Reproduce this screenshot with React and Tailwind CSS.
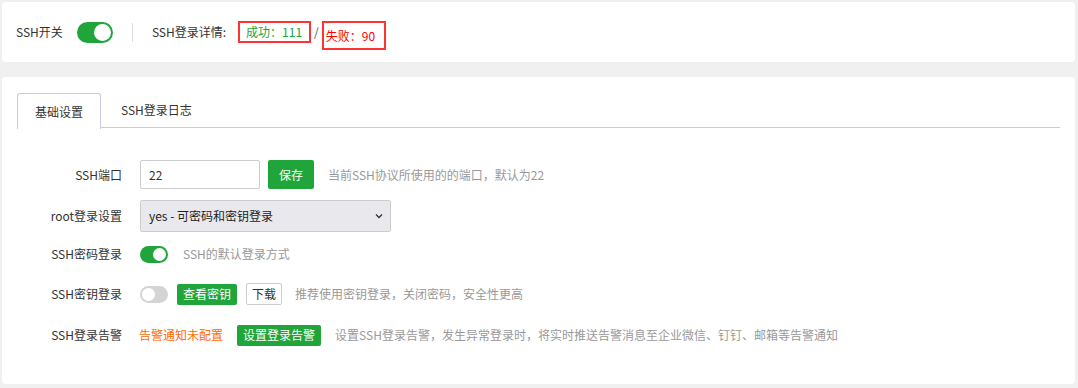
import React from "react";

function Toggle({ on, big }) {
  if (big) {
    return (
      <div className="relative w-[36px] h-[21px] rounded-full bg-[#20a53a]">
        <div className="absolute right-[2px] top-[2px] w-[17px] h-[17px] rounded-full bg-white" />
      </div>
    );
  }
  return (
    <div className={`relative w-[28px] h-[17px] rounded-full ${on ? "bg-[#20a53a]" : "bg-[#d4d4d4]"}`}>
      <div
        className={`absolute top-[2px] w-[13px] h-[13px] rounded-full bg-white ${on ? "right-[2px]" : "left-[2px]"}`}
      />
    </div>
  );
}

function Row({ label, className, children }) {
  return (
    <div className={`flex items-center ${className}`}>
      <div className="w-[105px] text-right text-[12px] text-[#333] shrink-0">{label}</div>
      <div className="ml-[18px] flex items-center h-full">{children}</div>
    </div>
  );
}

export default function App() {
  return (
    <div
      className="w-[1078px] h-[388px] bg-[#f0f0f0] pt-[2px] pl-[2px] pr-[3px]"
      style={{ fontFamily: '"Noto Sans CJK SC", "Noto Sans", sans-serif' }}
    >
      <div className="h-[60px] bg-white rounded-[4px] flex items-center pl-[14px] text-[12px] text-[#333]">
        <span>SSH开关</span>
        <div className="ml-[14px]">
          <Toggle big />
        </div>
        <div className="ml-[19px] w-px h-[19px] bg-[#ddd]" />
        <span className="ml-[19px]">SSH登录详情:</span>
        <div className="ml-[12px] self-start mt-[19px] flex items-start">
          <div className="w-[73px] h-[22px] border-2 border-[#ff3333] flex items-center pl-[6px] text-[#20a53a]">
            成功：111
          </div>
          <span className="ml-[3px] mt-[2px] text-[#555]">/</span>
          <div className="ml-[3px] w-[64px] h-[29px] border-2 border-[#ff3333] flex items-center pl-[2px] text-[#ff0000]">
            失败：90
          </div>
        </div>
      </div>

      <div className="mt-[15px] h-[307px] bg-white rounded-[4px] px-[15px] pt-[16px]">
        <div className="flex h-[35px] border-b border-[#cdc9dc] text-[12px] text-[#333]">
          <div className="w-[84px] h-[36px] border border-b-0 border-[#cdc9dc] rounded-t-[3px] bg-white flex items-center justify-center">
            基础设置
          </div>
          <div className="px-[20px] flex items-center">SSH登录日志</div>
        </div>

        <Row label="SSH端口" className="mt-[32px] h-[29px]">
          <div className="w-[120px] h-[29px] border border-[#ccc] rounded-[2px] flex items-center pl-[8px] text-[12px] text-[#333]">
            22
          </div>
          <button className="ml-[8px] w-[46px] h-[29px] bg-[#20a53a] text-white text-[12px] rounded-[2px]">
            保存
          </button>
          <span className="ml-[14px] text-[12px] text-[#999]">当前SSH协议所使用的的端口，默认为22</span>
        </Row>

        <Row label="root登录设置" className="mt-[11px] h-[32px]">
          <div className="w-[251px] h-[32px] border border-[#ccc] bg-[#e9e9ed] rounded-[2px] flex items-center justify-between pl-[8px] pr-[6px] text-[12px] text-[#222]">
            <span>yes - 可密码和密钥登录</span>
            <svg width="10" height="10" viewBox="0 0 10 10" fill="none">
              <path d="M2 3.5 L5 6.5 L8 3.5" stroke="#333" strokeWidth="1.3" />
            </svg>
          </div>
        </Row>

        <Row label="SSH密码登录" className="mt-[7px] h-[30px]">
          <Toggle on />
          <span className="ml-[15px] text-[12px] text-[#999]">SSH的默认登录方式</span>
        </Row>

        <Row label="SSH密钥登录" className="mt-[10px] h-[30px]">
          <Toggle on={false} />
          <button className="ml-[9px] w-[60px] h-[21px] bg-[#20a53a] text-white text-[12px] rounded-[2px]">
            查看密钥
          </button>
          <button className="ml-[9px] w-[36px] h-[22px] border border-[#ccc] bg-white text-[#333] text-[12px] rounded-[2px]">
            下载
          </button>
          <span className="ml-[13px] text-[12px] text-[#999]">推荐使用密钥登录，关闭密码，安全性更高</span>
        </Row>

        <Row label="SSH登录告警" className="mt-[10px] h-[32px]">
          <span className="text-[12px] text-[#ff6a00] -ml-[1px]">告警通知未配置</span>
          <button className="ml-[14px] w-[84px] h-[21px] bg-[#20a53a] text-white text-[12px] rounded-[2px]">
            设置登录告警
          </button>
          <span className="ml-[14px] text-[12px] text-[#999]">
            设置SSH登录告警，发生异常登录时，将实时推送告警消息至企业微信、钉钉、邮箱等告警通知
          </span>
        </Row>
      </div>
    </div>
  );
}
